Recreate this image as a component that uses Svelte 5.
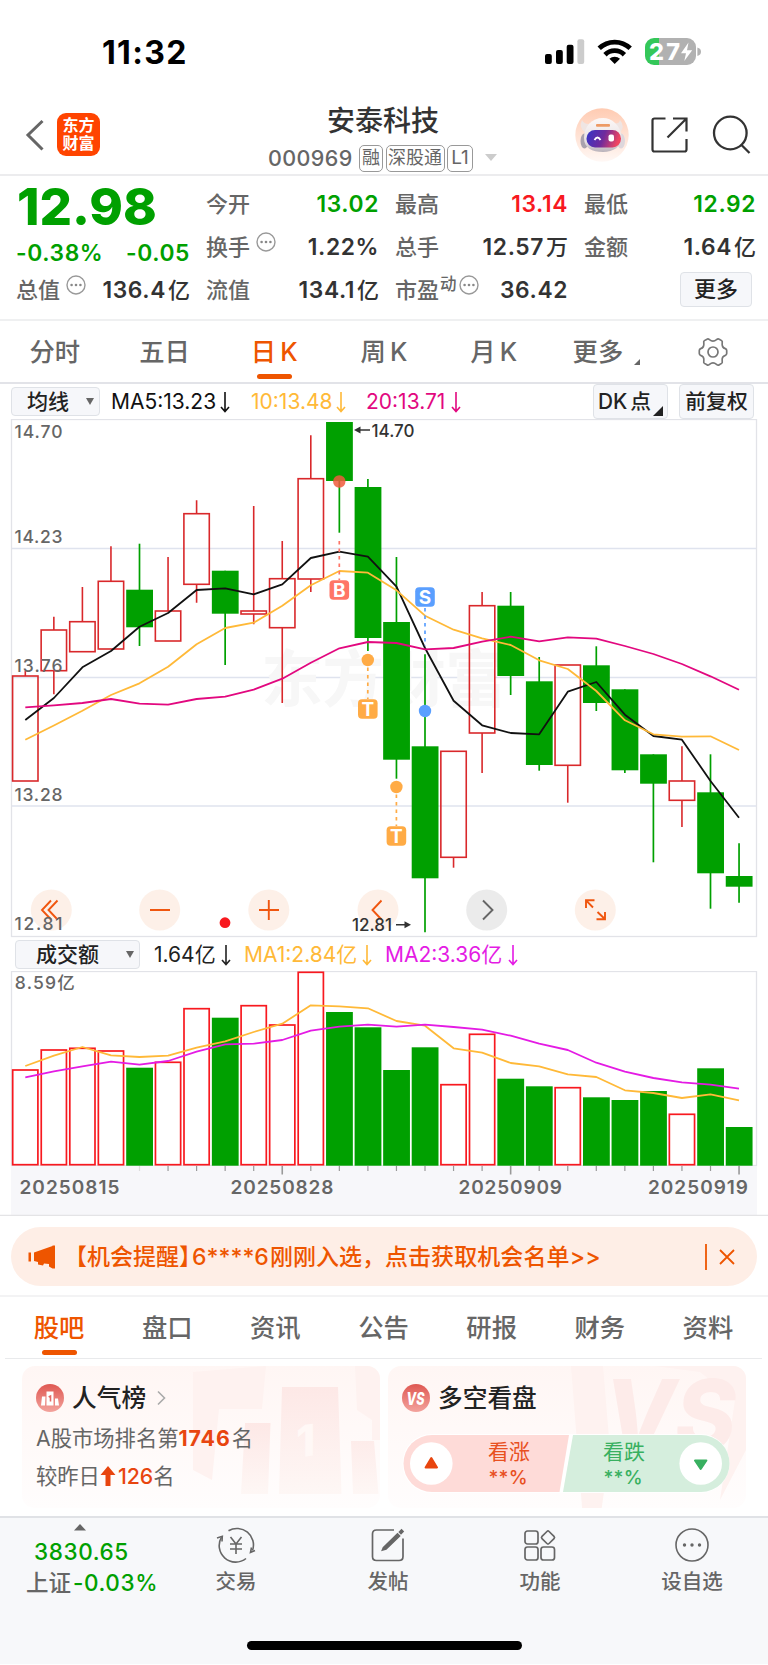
<script>
    const periods = ["分时", "五日", "日 K", "周 K", "月 K", "更多"];
    const sections = ["股吧", "盘口", "资讯", "公告", "研报", "财务", "资料"];

    // up/down, high, body top, body bottom, low
    const candles = [
        ["u", 671, 676, 781, 781],
        ["u", 616.7, 630, 670.7, 694.3],
        ["u", 587, 621.7, 651.7, 651.7],
        ["u", 546.3, 581.3, 649, 649],
        ["d", 543.7, 589.7, 627.3, 646],
        ["u", 557, 611, 641, 641],
        ["u", 500.3, 513.7, 584.3, 602.7],
        ["d", 570.7, 570.7, 613.7, 665],
        ["u", 506, 611, 614, 624.3],
        ["u", 541, 578.7, 627.7, 703],
        ["u", 435.3, 478.7, 579, 592],
        ["d", 422, 422, 481, 532.7],
        ["d", 479, 487, 638, 651],
        ["d", 557, 622, 759.7, 778.7],
        ["d", 654.3, 746.3, 878.3, 932.3],
        ["u", 751.3, 751.3, 857.3, 867.7],
        ["u", 592, 605.7, 733, 773],
        ["d", 592, 605.7, 676, 695],
        ["d", 657, 681.3, 765, 770.7],
        ["u", 665, 665, 765.3, 802.7],
        ["d", 646.3, 665.3, 703, 711],
        ["d", 689.3, 689.3, 770.3, 773],
        ["d", 754.3, 754.3, 783.7, 862.3],
        ["u", 746.3, 781, 800.3, 827],
        ["d", 754.3, 792.3, 873.3, 908.7],
        ["d", 843.3, 876, 886.7, 902.7],
    ];
    const volumes = [
        1070, 1050, 1048.3, 1051, 1067.7, 1062.3, 1008.7, 1017.7, 1005.7, 1025,
        972.3, 1012, 1027.3, 1070, 1047.3, 1084.7, 1034.3, 1078.7, 1086.3,
        1087.7, 1097.3, 1100, 1091, 1114.3, 1068.3, 1127,
    ];

    const ma5 = [
        720, 698, 667.3, 651, 626.7, 613, 590, 588.3, 594.3, 584.3, 558, 551.7,
        556.7, 586.7, 648, 700.7, 725.3, 733, 734.3, 691.7, 682, 714.7, 736,
        739.7, 781, 817.7,
    ];
    const ma10 = [
        739.7, 725.5, 710.7, 695, 683.3, 666.7, 644.3, 628, 622.7, 605.7, 585.3,
        571, 572.7, 590.3, 615.7, 629.7, 638.3, 645, 660.3, 669, 691, 720.3,
        734.3, 736.7, 736.3, 750,
    ];
    const ma20 = [
        707.3, 705.3, 703, 699, 703.7, 704.7, 699, 696.7, 689.7, 678.7, 662.7,
        648.3, 642, 643, 649.3, 648, 641.7, 636.7, 641.3, 637.3, 638.7, 646,
        654, 664, 676.3, 689.7,
    ];
    const vol1 = [
        1066, 1055.7, 1047, 1055.3, 1057, 1055.7, 1047.7, 1041.3, 1032, 1023.7,
        1005.3, 1006.3, 1008.3, 1021, 1025.7, 1048.3, 1052.7, 1063, 1066.3,
        1074.3, 1077, 1090.3, 1093, 1098, 1094.3, 1100.3,
    ];
    const vol2 = [
        1077.3, 1071.3, 1066.3, 1061.7, 1064.7, 1061, 1051.7, 1044.3, 1043.7,
        1040, 1030.7, 1026.7, 1024.7, 1026.7, 1024.7, 1027, 1029.7, 1035.7,
        1043.7, 1050, 1062.7, 1071.7, 1078, 1082.3, 1084.7, 1088.7,
    ];

    const prices = [
        ["14.70", 438],
        ["14.23", 542.7],
        ["13.76", 671.7],
        ["13.28", 800.7],
        ["12.81", 929.7],
    ];
    const dates = [
        ["20250815", 19.5, 100],
        ["20250828", 230.5, 103],
        ["20250909", 458.5, 103.5],
        ["20250919", 648, 100],
    ];
    const marks = [
        ["B", 339.3, 590, "#ff7566"],
        ["T", 367.8, 709, "#ffab45"],
        ["T", 396.4, 836, "#ffab45"],
        ["S", 425, 597, "#5a9fff"],
    ];

    const cx = (i) => 25.3 + i * 28.55;
    const line = (values) =>
        values.map((v, i) => cx(i).toFixed(1) + "," + v).join(" ");
</script>

{#snippet info()}
    <svg class="info" width="20" height="20" viewBox="0 0 20 20">
        <circle cx="10" cy="10" r="9" fill="none" stroke="#999" stroke-width="1.4" />
        <g fill="#888">
            <circle cx="5.6" cy="10" r="1.3" />
            <circle cx="10" cy="10" r="1.3" />
            <circle cx="14.4" cy="10" r="1.3" />
        </g>
    </svg>
{/snippet}

{#snippet down()}
    <svg class="down" width="10" height="22" viewBox="0 0 10 22">
        <path d="M5 1V20.5M1 16L5 20.5L9 16" fill="none" stroke="currentColor" stroke-width="1.6" />
    </svg>
{/snippet}

<div class="app">
    <div class="status">
        <span class="time">11:32</span>
        <svg width="160" height="32" viewBox="544 36 160 32">
            <rect x="545" y="54" width="6.8" height="10" rx="2" />
            <rect x="556" y="50" width="6.8" height="14" rx="2" />
            <rect x="566.7" y="44.7" width="6.8" height="19.3" rx="2" />
            <rect x="577.4" y="39.3" width="6.8" height="24.7" rx="2" fill="#ccc" />
            <g fill="none" stroke="#000" stroke-width="4.8">
                <path d="M599.2 48.3A22.3 22.3 0 0 1 630.2 48.3" />
                <path d="M605 54.7A13.8 13.8 0 0 1 624.4 54.7" />
            </g>
            <path d="M614.7 64L609.4 58.8A7.6 7.6 0 0 1 620 58.8Z" />
            <path d="M654 38H659V65H654A9 9 0 0 1 645 56V47A9 9 0 0 1 654 38Z" fill="#34c759" />
            <path d="M659 38H687A9 9 0 0 1 696 47V56A9 9 0 0 1 687 65H659Z" fill="#b1b1b1" />
            <path d="M697.4 47.5Q701 48.5 701 51.7T697.4 56Z" fill="#b1b1b1" />
            <text x="649" y="60.2" class="battery" textLength="31">27</text>
            <path d="M688.5 42.5L681 53.3H686L684.3 61L692.2 50.2H687Z" fill="#fff" />
        </svg>
    </div>

    <header>
        <svg class="back" width="20" height="34" viewBox="0 0 20 34">
            <path d="M17.5 3L3 17L17.5 31.5" fill="none" stroke="#666" stroke-width="3" />
        </svg>
        <div class="logo"><span>东方</span><span>财富</span></div>
        <div class="title">
            <h1>安泰科技</h1>
            <div class="code">
                <b>000969</b>
                <i>融</i>
                <i>深股通</i>
                <i class="level">L1</i>
                <svg width="12" height="8" viewBox="0 0 12 8"><path d="M0 0H12L6 7Z" fill="#ccc" /></svg>
            </div>
        </div>
        <svg class="robot" width="54" height="54" viewBox="0 0 54 54">
            <defs>
                <linearGradient id="halo" x1="0" y1="0" x2="0" y2="1">
                    <stop offset="0" stop-color="#ffcbb2" />
                    <stop offset="1" stop-color="#fff8f5" />
                </linearGradient>
                <linearGradient id="visor" x1="0" y1="0" x2="1" y2="0.2">
                    <stop offset="0" stop-color="#3435c8" />
                    <stop offset="0.55" stop-color="#702a9c" />
                    <stop offset="1" stop-color="#ef4561" />
                </linearGradient>
                <linearGradient id="shell" x1="0" y1="0" x2="0" y2="1">
                    <stop offset="0" stop-color="#fdf8f7" />
                    <stop offset="0.7" stop-color="#e6e0e3" />
                    <stop offset="1" stop-color="#b9b2ba" />
                </linearGradient>
            </defs>
            <circle cx="27" cy="27" r="26.7" fill="url(#halo)" />
            <path d="M7 12Q3 20 11 25L18 15Q10 18 7 12ZM45 12Q51 19 44 25L37 15Q44 17 45 12Z" fill="#efe5e3" />
            <ellipse cx="9.5" cy="33" rx="4" ry="7.5" fill="#a9a2ad" />
            <ellipse cx="46" cy="33" rx="4" ry="7.5" fill="#ddd7dc" />
            <path d="M28 10C37 10 45 17 46.5 28C47 39 38 44 28 44C17 44 9 40 9 30C9 18 17 10 28 10Z" fill="url(#shell)" />
            <rect x="21" y="16" width="14" height="2.8" rx="1" fill="#ed9a65" />
            <rect x="11.5" y="22" width="34.5" height="17.5" rx="8.5" fill="url(#visor)" />
            <path d="M19.5 32Q22.5 27 25.5 32" fill="none" stroke="#fff" stroke-width="1.8" />
            <rect x="33.5" y="26.5" width="5.5" height="7" rx="2" fill="#fff" />
        </svg>
        <svg class="share" width="38" height="38" viewBox="0 0 38 38" fill="none" stroke="#333" stroke-width="2.2">
            <path d="M15.5 2.5H4.5Q2.5 2.5 2.5 4.5V33.5Q2.5 35.5 4.5 35.5H34.5Q36.5 35.5 36.5 33.5V23M23 2.5H36.5V15.5M36 3L17.5 21.5" />
        </svg>
        <svg width="42" height="40" viewBox="0 0 42 40" fill="none" stroke="#333" stroke-width="2.3">
            <circle cx="20.3" cy="18" r="16.3" />
            <path d="M31 29.5L39.5 38" />
        </svg>
    </header>

    <section class="quote">
        <div class="col lead">
            <strong>12.98</strong>
            <div class="green change"><em>-0.38%</em><em>-0.05</em></div>
            <div><span>总值{@render info()}</span><em>136.4<u>亿</u></em></div>
        </div>
        <div class="col">
            <div><span>今开</span><em class="green">13.02</em></div>
            <div><span>换手{@render info()}</span><em>1.22%</em></div>
            <div><span>流值</span><em>134.1<u>亿</u></em></div>
        </div>
        <div class="col">
            <div><span>最高</span><em class="red">13.14</em></div>
            <div><span>总手</span><em>12.57<u>万</u></em></div>
            <div><span>市盈<sup>动</sup>{@render info()}</span><em>36.42</em></div>
        </div>
        <div class="col">
            <div><span>最低</span><em class="green">12.92</em></div>
            <div><span>金额</span><em>1.64<u>亿</u></em></div>
            <div><button class="more">更多</button></div>
        </div>
    </section>

    <nav class="periods">
        {#each periods as p, i}
            <span class:active={i === 2} class:menu={i === 5}>{p}</span>
        {/each}
        <span>
            <svg width="30" height="30" viewBox="0 0 30 30" fill="none" stroke="#777" stroke-width="1.7">
                <path d="M9 2.2Q10 1.3 11.5 2.6Q15 5.5 18.5 2.6Q20 1.3 21.3 2.2L23.6 3.6Q24.6 4.3 24.2 6Q23.6 10.5 27.3 11.6Q28.7 12.2 28.7 13.5V16.5Q28.7 17.8 27.3 18.4Q23.6 19.5 24.2 24Q24.6 25.7 23.6 26.4L21.3 27.8Q20 28.7 18.5 27.4Q15 24.5 11.5 27.4Q10 28.7 9 27.8L6.4 26.4Q5.4 25.7 5.8 24Q6.4 19.5 2.7 18.4Q1.3 17.8 1.3 16.5V13.5Q1.3 12.2 2.7 11.6Q6.4 10.5 5.8 6Q5.4 4.3 6.4 3.6Z" />
                <circle cx="15" cy="15" r="5" />
            </svg>
        </span>
    </nav>

    <div class="legend">
        <button class="select">均线</button>
        <span class="m5">MA5:13.23{@render down()}</span>
        <span class="m10">10:13.48{@render down()}</span>
        <span class="m20">20:13.71{@render down()}</span>
        <button class="chip dk">DK<u>点</u></button>
        <button class="chip">前复权</button>
    </div>

    <svg class="chart" width="768" height="519" viewBox="0 419 768 519">
        <g fill="none" stroke="#e2e3e8" stroke-width="1.3">
            <rect x="11.5" y="419.5" width="745" height="517" />
            <path d="M12 548.5H756M12 677.5H756M12 806H756" stroke="#dfe3ee" />
        </g>
        <text class="watermark" x="261" y="702" textLength="246">东方财富</text>

        {#each candles as [dir, high, top, bottom, low], i}
            {#if dir === "u"}
                <g fill="none" stroke="#d9282b" stroke-width="1.6">
                    <path d="M{cx(i)} {high}V{top}M{cx(i)} {bottom}V{low}" />
                    <rect x={cx(i) - 12.7} y={top} width="25.4" height={bottom - top} />
                </g>
            {:else}
                <path d="M{cx(i)} {high}V{low}" stroke="#00a000" stroke-width="1.7" />
                <rect x={cx(i) - 13.3} y={top} width="26.8" height={bottom - top} fill="#00a000" />
            {/if}
        {/each}

        <g fill="none" stroke-width="1.8" stroke-linejoin="round">
            <polyline points={line(ma5)} stroke="#111" />
            <polyline points={line(ma10)} stroke="#ffb938" />
            <polyline points={line(ma20)} stroke="#e2087f" />
        </g>

        <g fill="none" stroke-width="1.7" stroke-dasharray="3.5 4">
            <path d="M339.3 541V580" stroke="#ff7566" />
            <path d="M367.8 660V699M396.4 787V826" stroke="#ffab45" />
            <path d="M425 608V646" stroke="#5a9fff" />
        </g>
        <circle cx="339.3" cy="481.5" r="6.2" fill="#f05a3c" opacity="0.85" />
        <circle cx="367.8" cy="660" r="6.2" fill="#ffab45" />
        <circle cx="396.4" cy="787" r="6.2" fill="#ffab45" />
        <circle cx="425" cy="711" r="6.2" fill="#5a9fff" />
        {#each marks as [letter, x, y, color]}
            <rect x={x - 9.8} y={y - 9.8} width="19.6" height="19.6" rx="4" fill={color} />
            <text class="mark" {x} y={y + 7}>{letter}</text>
        {/each}

        <g fill="#fdeee6" fill-opacity="0.9">
            <circle cx="51.3" cy="910" r="20.5" />
            <circle cx="159.7" cy="910" r="20.5" />
            <circle cx="268.8" cy="910" r="20.5" />
            <circle cx="378" cy="910" r="20.5" />
            <circle cx="486.7" cy="910" r="20.5" fill="#e9e9e9" />
            <circle cx="595.3" cy="910" r="20.5" />
        </g>
        <g fill="none" stroke="#f0560f" stroke-width="1.9">
            <path d="M51 900.5L42 910L51 919.5M57.5 900.5L48.5 910L57.5 919.5" />
            <path d="M150 910H170M259 910H279M268.8 900V920M381.5 900.5L372.5 910L381.5 919.5" />
            <path d="M483 900.5L492.5 910L483 919.5" stroke="#666" />
            <path d="M586 908V900.3H594.5M586.3 900.6L593 907.5M605 912V919.3H596.5M604.6 918.8L597.5 912" />
        </g>
        <circle cx="225" cy="922.7" r="5.4" fill="#f8191f" />

        {#each prices as [label, y]}
            <text class="price" x="14.5" {y} textLength="48">{label}</text>
        {/each}
        <g class="peak">
            <text x="371.5" y="436.7" textLength="43">14.70</text>
            <text x="352" y="931" textLength="40">12.81</text>
            <path d="M358 430H370M396 924.7H407" stroke="#333" stroke-width="1.5" />
            <path d="M354 430L360.5 426.5V433.5ZM411 924.7L404.5 921.2V928.2Z" />
        </g>
    </svg>

    <div class="legend volume">
        <button class="select">成交额</button>
        <span class="v0">1.64亿{@render down()}</span>
        <span class="v1">MA1:2.84亿{@render down()}</span>
        <span class="v2">MA2:3.36亿{@render down()}</span>
    </div>

    <svg class="chart" width="768" height="245" viewBox="0 971 768 245">
        <rect x="11.5" y="971.5" width="745" height="194" fill="none" stroke="#e2e3e8" stroke-width="1.3" />
        <rect x="11" y="1166" width="746" height="50" fill="#f7f7fa" />
        <path d="M0 1215.5H768" stroke="#e4e4e6" stroke-width="1.3" />
        {#each volumes as top, i}
            {#if candles[i][0] === "u"}
                <rect x={cx(i) - 12.6} y={top} width="25.2" height={1164.7 - top} fill="none" stroke="#f8191f" stroke-width="1.7" />
            {:else}
                <rect x={cx(i) - 13.3} y={top} width="26.8" height={1165.7 - top} fill="#00a000" />
            {/if}
            {#if i > 3}
                <path d="M{cx(i)} 1166V{i % 8 === 1 ? 1174.5 : 1171}" stroke={i === 4 ? "#ddd" : "#999"} stroke-width={i % 8 === 1 ? 1.6 : 1.2} />
            {/if}
        {/each}
        <g fill="none" stroke-width="1.8" stroke-linejoin="round">
            <polyline points={line(vol1)} stroke="#ffb938" />
            <polyline points={line(vol2)} stroke="#e41be4" />
        </g>
        <text class="price" x="14.8" y="989" textLength="60">8.59亿</text>
        {#each dates as [label, x, w]}
            <text class="date" {x} y="1193.7" textLength={w}>{label}</text>
        {/each}
    </svg>

    <div class="notice">
        <svg width="30" height="26" viewBox="0 0 30 26" fill="#ee5500">
            <path d="M1.5 8.5H4V17.5H1.5ZM7 8.5L25.5 2V1.5H28V24.5H25.5L22 22.5V20L17 19.5L16 21.5L11 20.5V18L7 17Z" />
        </svg>
        <p>【机会提醒】<span class="id">6****6</span>刚刚入选，<span class="call">点击获取机会名单&gt;&gt;</span></p>
        <svg class="close" width="30" height="28" viewBox="0 0 30 28" fill="none" stroke="#ee5500" stroke-width="1.8">
            <path d="M1 1V27M15 7L29 21M29 7L15 21" />
        </svg>
    </div>

    <nav class="sections">
        {#each sections as s, i}
            <span class:active={i === 0}>{s}</span>
        {/each}
    </nav>

    <div class="cards">
        <div class="card">
            <svg class="bg" width="358" height="142" viewBox="22 1366 358 142">
                <defs>
                    <linearGradient id="fade" x1="0" y1="0" x2="0" y2="1">
                        <stop offset="0" stop-color="#fde8e6" />
                        <stop offset="1" stop-color="#fef7f5" />
                    </linearGradient>
                </defs>
                <path d="M193 1372L266 1366L262 1409H219L212 1480L193 1470Z" fill="#fef2f0" />
                <path d="M355 1366H380V1440H372V1420L357 1410Z" fill="#fef2f0" />
                <path d="M282 1387H338L341.5 1494H279Z" fill="url(#fade)" />
                <path d="M245 1423H270.5L268 1494H241ZM351 1441H374L378.5 1494H353Z" fill="url(#fade)" />
                <text x="0" y="0" class="rank" transform="translate(296 1458) skewY(-8)">1</text>
            </svg>
            <h2>
                <svg width="28" height="28" viewBox="0 0 28 28">
                    <defs>
                        <linearGradient id="badge" x1="0" y1="0" x2="0" y2="1">
                            <stop offset="0" stop-color="#df5852" />
                            <stop offset="1" stop-color="#f3a39d" />
                        </linearGradient>
                    </defs>
                    <circle cx="14" cy="14" r="14" fill="url(#badge)" />
                    <path d="M6 12.5H9.5L9 21.5H5ZM10.5 7.5H17.5V21.5H10.5ZM19 14.5H22L23 21.5H19Z" fill="#fff" />
                    <path d="M12.7 13L14.5 12V17.5" fill="none" stroke="#e36b66" stroke-width="1.6" />
                </svg>
                人气榜
                <svg width="9" height="16" viewBox="0 0 9 16"><path d="M1 1.5L7.5 8L1 14.5" fill="none" stroke="#aaa" stroke-width="1.6" /></svg>
            </h2>
            <p>A股市场排名第<b>1746</b>名</p>
            <p class="diff">较昨日<svg width="16" height="20" viewBox="0 0 16 20"><path d="M8 0L15.5 9H10.5V20H5.5V9H0.5Z" fill="#e8450f" /></svg><em>126</em>名</p>
        </div>
        <div class="card">
            <svg class="bg" width="358" height="142" viewBox="388 1366 358 142">
                <path d="M571 1366H603L610 1450L600 1520H583Z" fill="#fef2f0" />
                <path d="M655 1366H746V1450L720 1500L735 1400L700 1372Z" fill="#fef2f0" />
                <text class="versus" x="604" y="1450" textLength="132" lengthAdjust="spacingAndGlyphs">VS</text>
            </svg>
            <h2>
                <svg width="28" height="28" viewBox="0 0 28 28">
                    <circle cx="14" cy="14" r="14" fill="url(#badge)" />
                    <text class="vs" x="4.5" y="20.5" textLength="18" lengthAdjust="spacingAndGlyphs">VS</text>
                </svg>
                多空看盘
            </h2>
            <svg class="poll" width="328" height="60" viewBox="403 1434 328 60">
                <rect x="403.5" y="1434" width="327" height="59" rx="29" fill="#fff" />
                <path d="M433 1435H570L560.5 1492H433A28.5 28.5 0 0 1 433 1435Z" fill="#fedbd8" />
                <path d="M574 1435H702A28.5 28.5 0 0 1 702 1492H564Z" fill="#d5eedd" />
                <circle cx="432.3" cy="1463.5" r="21.3" fill="#fff" />
                <circle cx="701.7" cy="1463.5" r="21.3" fill="#fff" />
                <path d="M432.3 1458L438 1467.5H426.6Z" fill="#e8450f" stroke="#e8450f" stroke-width="2" stroke-linejoin="round" />
                <path d="M701.7 1469L696 1460.5H707.4Z" fill="#38b060" stroke="#38b060" stroke-width="2" stroke-linejoin="round" />
                <g fill="#e8501f">
                    <text x="489" y="1459" textLength="42">看涨</text>
                    <text x="489.5" y="1484" textLength="39" class="pct">**%</text>
                </g>
                <g fill="#38b060">
                    <text x="604" y="1459" textLength="42">看跌</text>
                    <text x="604.5" y="1484" textLength="39" class="pct">**%</text>
                </g>
            </svg>
        </div>
    </div>

    <footer>
        <div class="index">
            <svg width="12" height="7" viewBox="0 0 12 7"><path d="M6 0L12 6.5H0Z" fill="#666" /></svg>
            <em>3830.65</em>
            <div>上证<em>-0.03%</em></div>
        </div>
        <div class="tool">
            <svg width="40" height="36" viewBox="0 0 40 36" fill="none" stroke="#666" stroke-width="1.6">
                <path d="M12.5 3.8A16.5 16.5 0 0 1 36.5 23.5M30 31.5A16.5 16.5 0 0 1 5.5 10.2" />
                <path d="M1 11L6.3 9.3L6 14.5M39 23.5L34.5 25.5L35.5 20.5" />
                <path d="M14.5 10L20 17L25.5 10M20 17V27M14 17H26M14 22H26" />
            </svg>
            交易
        </div>
        <div class="tool">
            <svg width="36" height="36" viewBox="0 0 36 36" fill="none" stroke="#666" stroke-width="1.7">
                <path d="M24 3H6.5Q2.5 3 2.5 7V29.5Q2.5 33.5 6.5 33.5H29Q33 33.5 33 29.5V11.5" />
                <path d="M13.5 20.5L27.5 7L29.5 9L16 22L12.5 23ZM29.5 5L31.5 3L33 4.5L31 6.5Z" fill="#666" />
            </svg>
            发帖
        </div>
        <div class="tool">
            <svg width="34" height="36" viewBox="0 0 34 36" fill="none" stroke="#666" stroke-width="1.7">
                <rect x="2" y="4" width="13" height="13" rx="2.5" />
                <rect x="2" y="20" width="13" height="13" rx="2.5" />
                <rect x="18" y="20" width="13.5" height="13" rx="2.5" />
                <rect x="-5" y="-5" width="10" height="10" rx="1.5" transform="translate(25 10.5) rotate(45)" />
            </svg>
            功能
        </div>
        <div class="tool">
            <svg width="36" height="36" viewBox="0 0 36 36">
                <circle cx="18" cy="18" r="16" fill="none" stroke="#666" stroke-width="1.6" />
                <g fill="#666">
                    <circle cx="10.5" cy="18" r="1.7" />
                    <circle cx="18" cy="18" r="1.7" />
                    <circle cx="25.5" cy="18" r="1.7" />
                </g>
            </svg>
            设自选
        </div>
        <div class="home"></div>
    </footer>
</div>

<style>
    :global(body) {
        background: #fff;
    }
    .app {
        width: 768px;
        height: 1665px;
        overflow: hidden;
        display: flex;
        flex-direction: column;
        font-family: Inter, "Noto Sans CJK SC", sans-serif;
        color: #333;
    }
    .app > * {
        box-sizing: border-box;
        flex: none;
    }
    svg {
        display: block;
        flex: none;
    }
    em,
    i,
    u {
        font-style: normal;
        text-decoration: none;
    }
    h1,
    h2,
    p {
        margin: 0;
    }
    button {
        box-sizing: border-box;
        padding: 0;
        font: inherit;
        color: #222;
        background: #f6f7fa;
        border: 1.5px solid #dfe2e7;
        border-radius: 4px;
    }
    .green {
        color: #00a000;
    }
    .red {
        color: #f8191f;
    }

    .status {
        height: 104px;
        padding: 36px 64px 0 102px;
        display: flex;
        justify-content: space-between;
        color: #000;
    }
    .time {
        font-size: 32px;
        line-height: 34px;
        font-weight: 700;
        letter-spacing: 1.3px;
    }
    .battery {
        font: 800 23.5px Inter;
        fill: #fff;
    }

    header {
        height: 72px;
        border-bottom: 2px solid #ececee;
        display: flex;
        padding-left: 25px;
    }
    .back {
        margin-top: 14px;
    }
    .logo {
        width: 43px;
        height: 43px;
        margin: 9px 0 0 12px;
        border-radius: 9px;
        background: #ff4400;
        color: #fff;
        font-size: 16px;
        line-height: 17.5px;
        font-weight: 700;
        display: flex;
        flex-direction: column;
        align-items: center;
        justify-content: center;
    }
    .title {
        margin-left: 168px;
        width: 230px;
    }
    h1 {
        margin-left: 59px;
        font-size: 28px;
        line-height: 34px;
        font-weight: 500;
    }
    .code {
        display: flex;
        align-items: center;
        height: 28px;
        margin-top: 6px;
        color: #666;
        white-space: nowrap;
    }
    .code b {
        width: 91px;
        font-size: 21.5px;
        font-weight: 500;
        letter-spacing: 0.4px;
    }
    .code i {
        box-sizing: border-box;
        width: 24px;
        height: 27px;
        margin-right: 2.5px;
        border: 1.5px solid #999;
        border-radius: 5px;
        font-size: 18px;
        line-height: 24px;
        text-align: center;
    }
    .code i + i {
        width: 59px;
    }
    .code .level {
        width: 26px;
        margin-right: 0;
        font-size: 19px;
    }
    .code svg {
        margin-left: 12px;
    }
    .robot {
        margin: 4px 0 0 77px;
    }
    .share {
        margin: 12px 0 0 20.5px;
    }
    .share + svg {
        margin: 11px 0 0 22px;
    }

    .quote {
        height: 145px;
        padding: 6px 12px 0 16px;
        border-bottom: 2px solid #eff0f1;
        display: grid;
        grid-template-columns: 173px 172px 172px 171px;
        column-gap: 17px;
    }
    .col > div {
        height: 43px;
        display: flex;
        align-items: center;
        justify-content: space-between;
        font-size: 22px;
        line-height: 30px;
    }
    .col span {
        display: flex;
        height: 30px;
        color: #666;
        font-weight: 500;
    }
    .col em {
        margin-right: -1px;
        font-size: 22.8px;
        font-weight: 570;
        letter-spacing: 0.6px;
    }
    .col u {
        margin-left: 2px;
        font-size: 22px;
        font-weight: 500;
        letter-spacing: 0;
    }
    .lead strong {
        display: block;
        height: 43px;
        margin-left: 1px;
        font-size: 51px;
        line-height: 50px;
        font-weight: 800;
        letter-spacing: 0;
        color: #00a000;
    }
    .col .change {
        padding-top: 12px;
        height: 31px;
    }
    .info {
        margin: 0.5px 0 0 6px;
    }
    sup {
        font-size: 16.5px;
        line-height: 22px;
        margin: -2px -4px 0 1px;
    }
    .more {
        width: 72px;
        height: 35px;
        margin: 0 3px 0 auto;
        line-height: 31px;
        font-weight: 500;
    }

    .periods {
        height: 63px;
        border-bottom: 2px solid #e2e3e8;
        display: grid;
        grid-template-columns: repeat(7, 1fr);
    }
    .periods span,
    .sections span {
        position: relative;
        display: flex;
        align-items: center;
        justify-content: center;
        font-size: 25.3px;
        line-height: 30px;
        font-weight: 500;
        word-spacing: -2.5px;
        color: #666;
    }
    .periods .active,
    .sections .active {
        color: #ee5500;
    }
    .active::after {
        content: "";
        position: absolute;
        left: 50%;
        bottom: 3px;
        width: 35px;
        height: 5.5px;
        margin-left: -17.5px;
        border-radius: 3px;
        background: #ee5500;
    }
    .periods .menu {
        padding-right: 11px;
    }
    .menu::after {
        content: "";
        position: absolute;
        right: 18px;
        bottom: 17px;
        border: 3.5px solid transparent;
        border-right-color: #666;
        border-bottom-color: #666;
    }

    .legend {
        height: 35px;
        padding-left: 11px;
        display: flex;
        align-items: center;
        font-size: 21px;
        line-height: 26px;
        color: #222;
    }
    .select {
        width: 89px;
        height: 29px;
        padding: 0 5px 0 15px;
        font-weight: 500;
        display: flex;
        align-items: center;
        justify-content: space-between;
    }
    .select::after {
        content: "";
        border: 4px solid transparent;
        border-top: 7px solid #666;
        border-bottom: 0;
    }
    .legend span {
        display: flex;
        align-items: center;
        justify-content: space-between;
    }
    .m5 {
        width: 119px;
        margin-left: 11px;
        color: #111;
    }
    .m10 {
        width: 95px;
        margin-left: 21px;
        color: #ffb938;
    }
    .m20 {
        width: 95px;
        margin-left: 20px;
        color: #e2087f;
    }
    .chip {
        width: 75px;
        height: 35px;
        font-weight: 500;
        font-size: 20.8px;
        line-height: 32px;
        white-space: nowrap;
    }
    .dk {
        position: relative;
        margin: 0 11px 0 132px;
        padding-right: 12px;
    }
    .dk u {
        margin-left: 3px;
    }
    .dk::after {
        content: "";
        position: absolute;
        right: 4px;
        bottom: 2px;
        border: 5px solid transparent;
        border-right-color: #222;
        border-bottom-color: #222;
    }
    .volume {
        height: 33px;
        padding-left: 15px;
    }
    .volume .select {
        width: 125px;
        padding-left: 20px;
    }
    .v0 {
        width: 77px;
        margin-left: 14px;
    }
    .v1 {
        width: 128px;
        margin-left: 13px;
        color: #ffb938;
    }
    .v2 {
        width: 133px;
        margin-left: 13px;
        color: #e41be4;
    }

    .watermark {
        font: 700 62px "Noto Sans CJK SC";
        fill: #f7f7f7;
    }
    .price {
        font-size: 17.5px;
        font-weight: 500;
        fill: #666;
    }
    .date {
        font-size: 19px;
        font-weight: 600;
        fill: #666;
    }
    .peak {
        font-size: 17px;
        font-weight: 500;
        fill: #333;
    }
    .mark {
        font: 700 19px Inter;
        fill: #fff;
        text-anchor: middle;
    }

    .notice {
        height: 59px;
        margin: 11px 11px 9px;
        padding: 0 22px 0 16px;
        border-radius: 30px;
        background: #feeee6;
        display: flex;
        align-items: center;
    }
    .notice p {
        margin-left: 7px;
        font-size: 23px;
        line-height: 30px;
        font-weight: 500;
        color: #ee5500;
        white-space: nowrap;
    }
    .id {
        margin: 0 1px 0 -10px;
    }
    .call {
        letter-spacing: 0.1px;
    }
    .close {
        margin-left: auto;
    }

    .sections {
        height: 64px;
        padding: 0 6px 0 5px;
        border-top: 2px solid #f3f3f4;
        display: grid;
        grid-template-columns: repeat(7, 1fr);
    }
    .sections span {
        border-bottom: 1.5px solid #e9eaec;
    }

    .cards {
        height: 157px;
        padding: 7px 22px 0;
        display: flex;
        gap: 8px;
    }
    .card {
        position: relative;
        box-sizing: border-box;
        width: 358px;
        height: 142px;
        padding: 14px;
        border-radius: 13px;
        overflow: hidden;
        background: linear-gradient(#fff6f4, #fffdfd);
    }
    .card > * {
        position: relative;
    }
    .card .bg {
        position: absolute;
        left: 0;
        top: 0;
    }
    h2 {
        height: 36px;
        display: flex;
        align-items: center;
        gap: 8px;
        font-size: 24.7px;
        line-height: 34px;
        font-weight: 500;
        color: #222;
    }
    h2 svg + svg {
        margin-left: 3px;
    }
    .card p {
        height: 38px;
        margin-top: 3px;
        font-size: 21.3px;
        line-height: 38px;
        color: #666;
    }
    .card .diff {
        display: flex;
        align-items: center;
        margin-top: 0;
    }
    .card b {
        color: #e8450f;
        margin-right: 1px;
        letter-spacing: 0.9px;
    }
    .diff em {
        color: #e8450f;
        font-weight: 500;
        margin: 0 0 0 2px;
    }
    .rank {
        font: 800 44px Inter;
        fill: #fff8f6;
    }
    .versus {
        font: italic 800 98px Inter;
        fill: #fdebe9;
    }
    .vs {
        font: italic 800 18px Inter;
        fill: #fff;
    }
    .poll {
        margin: 18px 0 0;
        font-size: 21px;
    }
    .pct {
        font-size: 19px;
        font-weight: 500;
    }

    footer {
        position: relative;
        height: 148px;
        border-top: 2px solid #e0e2e6;
        background: #f7f8fa;
        display: grid;
        grid-template-columns: 160px repeat(4, 152px);
    }
    .index {
        padding: 6px 0 0 26px;
        font-size: 22.5px;
        line-height: 31px;
        color: #666;
        font-weight: 500;
    }
    .index svg {
        margin-left: 48px;
        margin-bottom: 5px;
    }
    .index em {
        display: inline-block;
        color: #00a000;
        letter-spacing: 0.6px;
    }
    .index > em {
        display: block;
        margin-left: 8px;
    }
    .index div em {
        margin-left: 2px;
    }
    .tool {
        display: flex;
        flex-direction: column;
        align-items: center;
        padding-top: 9px;
        font-size: 20.5px;
        line-height: 37px;
        color: #666;
        font-weight: 500;
    }
    .home {
        position: absolute;
        left: 247px;
        bottom: 14px;
        width: 275px;
        height: 9px;
        border-radius: 5px;
        background: #000;
    }
</style>
